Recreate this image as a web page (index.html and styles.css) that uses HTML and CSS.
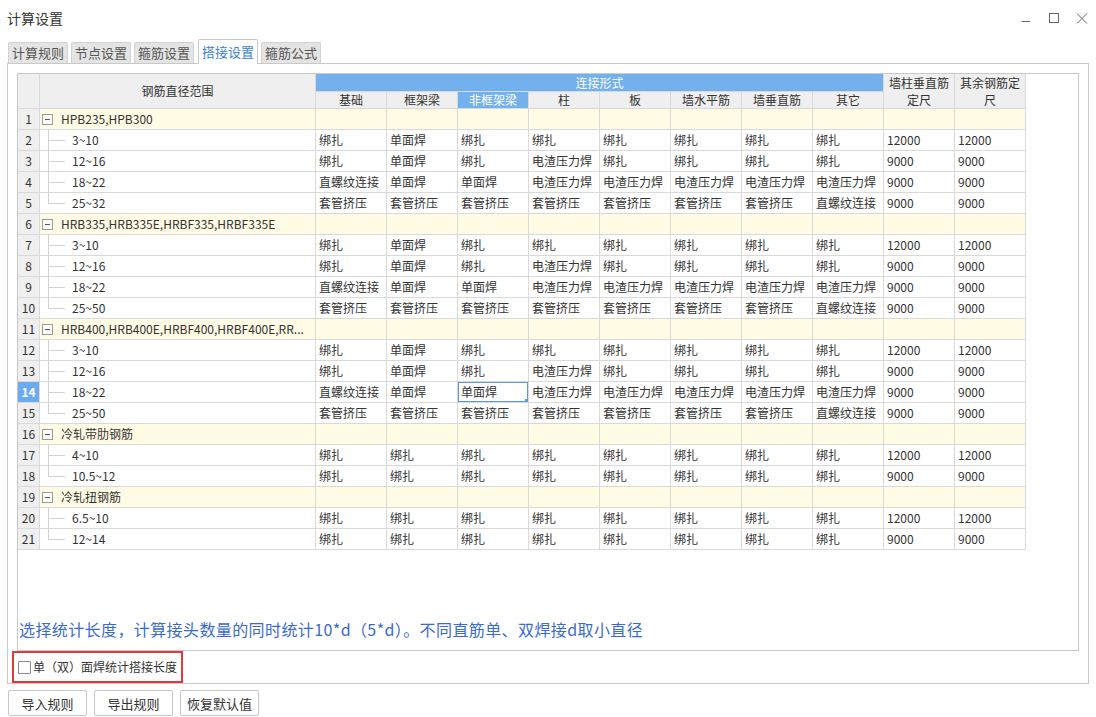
FILE: index.html
```html
<!DOCTYPE html>
<html lang="zh-CN">
<head>
<meta charset="utf-8">
<title>计算设置</title>
<link rel="stylesheet" href="styles.css">
</head>
<body>
<div class="window">
  <header class="titlebar">
    <div class="title">计算设置</div>
    <div class="winctrls">
      <svg class="ctl" width="12" height="12" viewBox="0 0 12 12"><line x1="1.5" y1="8.5" x2="10" y2="8.5" stroke="#666" stroke-width="1"/></svg>
      <svg class="ctl" width="12" height="12" viewBox="0 0 12 12"><rect x="1.5" y="0.5" width="9" height="9" fill="none" stroke="#666" stroke-width="1"/></svg>
      <svg class="ctl" width="12" height="12" viewBox="0 0 12 12"><path d="M1 0.5 L11 10.5 M11 0.5 L1 10.5" stroke="#666" stroke-width="1" fill="none"/></svg>
    </div>
  </header>

  <nav class="tabs">
    <div class="tab">计算规则</div>
    <div class="tab">节点设置</div>
    <div class="tab">箍筋设置</div>
    <div class="tab active">搭接设置</div>
    <div class="tab">箍筋公式</div>
  </nav>

  <section class="panel">
    <div class="gridbox">
      <table class="grid">
        <colgroup>
          <col class="c-num"><col class="c-range">
          <col class="c-d"><col class="c-d"><col class="c-d"><col class="c-d"><col class="c-d">
          <col class="c-d"><col class="c-d"><col class="c-d"><col class="c-d"><col class="c-d">
        </colgroup>
        <thead>
          <tr class="h1">
            <th class="hn" rowspan="2"></th>
            <th class="hr" rowspan="2">钢筋直径范围</th>
            <th class="hb" colspan="8">连接形式</th>
            <th class="h2l" rowspan="2">墙柱垂直筋<br>定尺</th>
            <th class="h2l" rowspan="2">其余钢筋定<br>尺</th>
          </tr>
          <tr class="h2">
            <th>基础</th><th>框架梁</th><th class="hsel">非框架梁</th><th>柱</th><th>板</th><th>墙水平筋</th><th>墙垂直筋</th><th>其它</th>
          </tr>
        </thead>
        <tbody>
          <tr class="grp"><td class="n">1</td><td class="r"><span class="tog"></span>HPB235,HPB300</td><td></td><td></td><td></td><td></td><td></td><td></td><td></td><td></td><td></td><td></td></tr>
          <tr class="ch"><td class="n">2</td><td class="r">3~10</td><td>绑扎</td><td>单面焊</td><td>绑扎</td><td>绑扎</td><td>绑扎</td><td>绑扎</td><td>绑扎</td><td>绑扎</td><td>12000</td><td>12000</td></tr>
          <tr class="ch"><td class="n">3</td><td class="r">12~16</td><td>绑扎</td><td>单面焊</td><td>绑扎</td><td>电渣压力焊</td><td>绑扎</td><td>绑扎</td><td>绑扎</td><td>绑扎</td><td>9000</td><td>9000</td></tr>
          <tr class="ch"><td class="n">4</td><td class="r">18~22</td><td>直螺纹连接</td><td>单面焊</td><td>单面焊</td><td>电渣压力焊</td><td>电渣压力焊</td><td>电渣压力焊</td><td>电渣压力焊</td><td>电渣压力焊</td><td>9000</td><td>9000</td></tr>
          <tr class="ch last"><td class="n">5</td><td class="r">25~32</td><td>套管挤压</td><td>套管挤压</td><td>套管挤压</td><td>套管挤压</td><td>套管挤压</td><td>套管挤压</td><td>套管挤压</td><td>直螺纹连接</td><td>9000</td><td>9000</td></tr>

          <tr class="grp"><td class="n">6</td><td class="r"><span class="tog"></span>HRB335,HRB335E,HRBF335,HRBF335E</td><td></td><td></td><td></td><td></td><td></td><td></td><td></td><td></td><td></td><td></td></tr>
          <tr class="ch"><td class="n">7</td><td class="r">3~10</td><td>绑扎</td><td>单面焊</td><td>绑扎</td><td>绑扎</td><td>绑扎</td><td>绑扎</td><td>绑扎</td><td>绑扎</td><td>12000</td><td>12000</td></tr>
          <tr class="ch"><td class="n">8</td><td class="r">12~16</td><td>绑扎</td><td>单面焊</td><td>绑扎</td><td>电渣压力焊</td><td>绑扎</td><td>绑扎</td><td>绑扎</td><td>绑扎</td><td>9000</td><td>9000</td></tr>
          <tr class="ch"><td class="n">9</td><td class="r">18~22</td><td>直螺纹连接</td><td>单面焊</td><td>单面焊</td><td>电渣压力焊</td><td>电渣压力焊</td><td>电渣压力焊</td><td>电渣压力焊</td><td>电渣压力焊</td><td>9000</td><td>9000</td></tr>
          <tr class="ch last"><td class="n">10</td><td class="r">25~50</td><td>套管挤压</td><td>套管挤压</td><td>套管挤压</td><td>套管挤压</td><td>套管挤压</td><td>套管挤压</td><td>套管挤压</td><td>直螺纹连接</td><td>9000</td><td>9000</td></tr>

          <tr class="grp"><td class="n">11</td><td class="r"><span class="tog"></span>HRB400,HRB400E,HRBF400,HRBF400E,RR...</td><td></td><td></td><td></td><td></td><td></td><td></td><td></td><td></td><td></td><td></td></tr>
          <tr class="ch"><td class="n">12</td><td class="r">3~10</td><td>绑扎</td><td>单面焊</td><td>绑扎</td><td>绑扎</td><td>绑扎</td><td>绑扎</td><td>绑扎</td><td>绑扎</td><td>12000</td><td>12000</td></tr>
          <tr class="ch"><td class="n">13</td><td class="r">12~16</td><td>绑扎</td><td>单面焊</td><td>绑扎</td><td>电渣压力焊</td><td>绑扎</td><td>绑扎</td><td>绑扎</td><td>绑扎</td><td>9000</td><td>9000</td></tr>
          <tr class="ch"><td class="n cur">14</td><td class="r">18~22</td><td>直螺纹连接</td><td>单面焊</td><td class="sel">单面焊</td><td>电渣压力焊</td><td>电渣压力焊</td><td>电渣压力焊</td><td>电渣压力焊</td><td>电渣压力焊</td><td>9000</td><td>9000</td></tr>
          <tr class="ch last"><td class="n">15</td><td class="r">25~50</td><td>套管挤压</td><td>套管挤压</td><td>套管挤压</td><td>套管挤压</td><td>套管挤压</td><td>套管挤压</td><td>套管挤压</td><td>直螺纹连接</td><td>9000</td><td>9000</td></tr>

          <tr class="grp"><td class="n">16</td><td class="r"><span class="tog"></span>冷轧带肋钢筋</td><td></td><td></td><td></td><td></td><td></td><td></td><td></td><td></td><td></td><td></td></tr>
          <tr class="ch"><td class="n">17</td><td class="r">4~10</td><td>绑扎</td><td>绑扎</td><td>绑扎</td><td>绑扎</td><td>绑扎</td><td>绑扎</td><td>绑扎</td><td>绑扎</td><td>12000</td><td>12000</td></tr>
          <tr class="ch last"><td class="n">18</td><td class="r">10.5~12</td><td>绑扎</td><td>绑扎</td><td>绑扎</td><td>绑扎</td><td>绑扎</td><td>绑扎</td><td>绑扎</td><td>绑扎</td><td>9000</td><td>9000</td></tr>

          <tr class="grp"><td class="n">19</td><td class="r"><span class="tog"></span>冷轧扭钢筋</td><td></td><td></td><td></td><td></td><td></td><td></td><td></td><td></td><td></td><td></td></tr>
          <tr class="ch"><td class="n">20</td><td class="r">6.5~10</td><td>绑扎</td><td>绑扎</td><td>绑扎</td><td>绑扎</td><td>绑扎</td><td>绑扎</td><td>绑扎</td><td>绑扎</td><td>12000</td><td>12000</td></tr>
          <tr class="ch last"><td class="n">21</td><td class="r">12~14</td><td>绑扎</td><td>绑扎</td><td>绑扎</td><td>绑扎</td><td>绑扎</td><td>绑扎</td><td>绑扎</td><td>绑扎</td><td>9000</td><td>9000</td></tr>
        </tbody>
      </table>
      <p class="note">选择统计长度，计算接头数量的同时统计10*d（5*d）。不同直筋单、双焊接d取小直径</p>
    </div>
    <label class="opt"><span class="cb"></span><span class="opt-text">单（双）面焊统计搭接长度</span></label>
  </section>

  <div class="buttons">
    <button class="btn">导入规则</button>
    <button class="btn">导出规则</button>
    <button class="btn">恢复默认值</button>
  </div>
</div>
</body>
</html>
```

FILE: styles.css
```css
* { box-sizing: border-box; }
html, body { margin: 0; padding: 0; }
body {
  width: 1096px;
  height: 717px;
  overflow: hidden;
  background: #ffffff;
  color: #333333;
  font-family: "Noto Sans CJK SC", "Noto Sans", sans-serif;
  font-size: 12px;
}

.window { width: 1096px; height: 717px; }

/* title bar */
.titlebar {
  height: 39px;
  display: flex;
  justify-content: space-between;
  align-items: flex-start;
  padding: 8px 8px 0 7px;
}
.title { font-size: 14px; line-height: 20px; color: #333; }
.winctrls { display: flex; gap: 16px; padding-top: 5px; }
.ctl { display: block; }

/* tabs */
.tabs {
  height: 24px;
  display: flex;
  align-items: flex-end;
  padding-left: 8px;
  position: relative;
  z-index: 1;
}
.tab {
  width: 60px;
  height: 21px;
  margin-right: 3px;
  background: #e4e4e4;
  border: 1px solid #d2d2d2;
  border-bottom: none;
  border-radius: 2px 2px 0 0;
  color: #555;
  font-size: 13px;
  line-height: 20px;
  text-align: center;
}
.tab.active {
  height: 25px;
  margin-bottom: -1px;
  margin-left: 1px;
  background: #ffffff;
  border-color: #c8c8c8;
  color: #3b7fd4;
  line-height: 24px;
}

/* panel */
.panel {
  margin: 0 7px;
  height: 621px;
  border: 1px solid #c9c9c9;
  padding: 9px 9px 0 9px;
}
.gridbox {
  height: 578px;
  border: 1px solid #c9c9c9;
  display: flex;
  flex-direction: column;
  justify-content: space-between;
}

/* grid */
.grid {
  width: 1008px;
  table-layout: fixed;
  border-collapse: separate;
  border-spacing: 0;
}
.c-num { width: 22px; }
.c-range { width: 276px; }
.c-d { width: 71px; }

.grid th, .grid td {
  padding: 0;
  border-right: 1px solid #d9d9d9;
  border-bottom: 1px solid #d9d9d9;
  font-weight: normal;
  white-space: nowrap;
  overflow: hidden;
}
.grid th {
  background: #efefef;
  color: #333;
  text-align: center;
  font-size: 12px;
  line-height: 16px;
}
.h1 th { height: 18px; }
.h2 th { height: 17px; }
.grid th.hb, .grid th.hsel {
  background: #72b0ee;
  color: #ffffff;
}
.grid th.h2l { line-height: 17px; }

.grid td {
  height: 21px;
  line-height: 20px;
  padding-left: 3px;
  text-align: left;
  color: #333;
}
.grid td.n {
  padding: 0;
  text-align: center;
  background: #efefef;
}
.grid td.n.cur {
  background: #6aaaee;
  color: #ffffff;
  font-weight: bold;
}
.grp td { background: #fffbe5; }
.grp td.n { background: #efefef; }
.grp td.r {
  padding-left: 2px;
  text-overflow: ellipsis;
}
.tog {
  display: inline-block;
  width: 11px;
  height: 11px;
  border: 1px solid #9a9a9a;
  background: #fff;
  vertical-align: -1px;
  margin-right: 8px;
  position: relative;
}
.tog::after {
  content: "";
  position: absolute;
  left: 2px;
  top: 4px;
  width: 5px;
  border-top: 1px solid #555;
}
.ch td.r {
  position: relative;
  padding-left: 32px;
}
.ch td.r::before {
  content: "";
  position: absolute;
  left: 8px;
  top: -1px;
  bottom: -1px;
  border-left: 1px solid #d2d2d2;
}
.ch.last td.r::before { bottom: 10px; }
.ch td.r::after {
  content: "";
  position: absolute;
  left: 8px;
  top: 10px;
  width: 17px;
  border-top: 1px solid #d2d2d2;
}
.grid td.sel {
  position: relative;
  box-shadow: inset 0 0 0 1px #5b9ae0;
}
.grid td.sel::after {
  content: "";
  position: absolute;
  right: -1px;
  bottom: -1px;
  width: 4px;
  height: 4px;
  background: #5b9ae0;
}

.note {
  margin: 0;
  padding: 0 0 10px 1px;
  font-size: 16px;
  line-height: 22px;
  letter-spacing: 0.4px;
  color: #3a6bcc;
}

/* option */
.opt {
  display: flex;
  align-items: center;
  width: 171px;
  height: 32px;
  margin-left: -5px;
  padding-left: 4px;
  border: 2px solid #e23a3a;
  font-size: 12px;
  color: #333;
}
.cb {
  width: 13px;
  height: 13px;
  border: 1px solid #8a8a8a;
  border-radius: 1px;
  background: #fff;
  margin-right: 2px;
  flex: none;
}
.opt-text { line-height: 16px; white-space: nowrap; }

/* buttons */
.buttons {
  display: flex;
  gap: 7px;
  padding-left: 8px;
  margin-top: 6px;
}
.btn {
  width: 79px;
  height: 26px;
  padding: 0;
  background: #ffffff;
  border: 1px solid #c6c6c6;
  border-radius: 2px;
  font-family: "Noto Sans CJK SC", sans-serif;
  font-size: 13px;
  color: #333;
}
```
